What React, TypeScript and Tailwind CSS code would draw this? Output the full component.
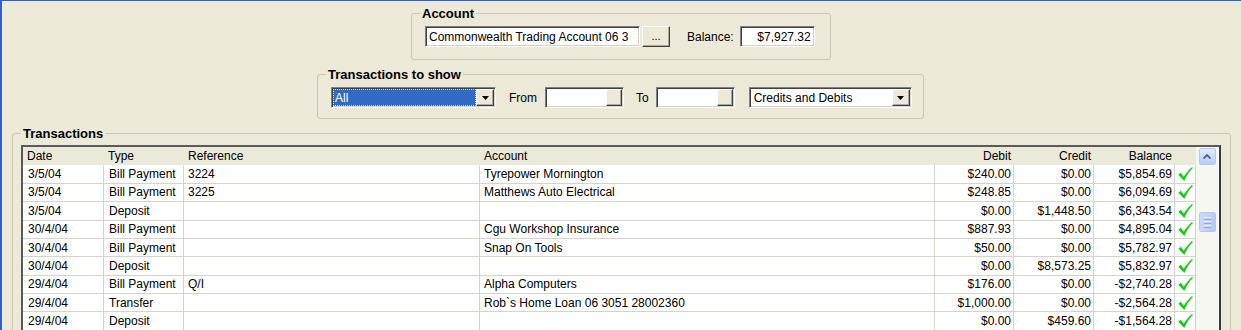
import React from 'react';

type Row = {
    date: string;
    type: string;
    ref: string;
    account: string;
    debit: string;
    credit: string;
    balance: string;
};

const rows: Row[] = [
    { date: '3/5/04', type: 'Bill Payment', ref: '3224', account: 'Tyrepower Mornington', debit: '$240.00', credit: '$0.00', balance: '$5,854.69' },
    { date: '3/5/04', type: 'Bill Payment', ref: '3225', account: 'Matthews Auto Electrical', debit: '$248.85', credit: '$0.00', balance: '$6,094.69' },
    { date: '3/5/04', type: 'Deposit', ref: '', account: '', debit: '$0.00', credit: '$1,448.50', balance: '$6,343.54' },
    { date: '30/4/04', type: 'Bill Payment', ref: '', account: 'Cgu Workshop Insurance', debit: '$887.93', credit: '$0.00', balance: '$4,895.04' },
    { date: '30/4/04', type: 'Bill Payment', ref: '', account: 'Snap On Tools', debit: '$50.00', credit: '$0.00', balance: '$5,782.97' },
    { date: '30/4/04', type: 'Deposit', ref: '', account: '', debit: '$0.00', credit: '$8,573.25', balance: '$5,832.97' },
    { date: '29/4/04', type: 'Bill Payment', ref: 'Q/I', account: 'Alpha Computers', debit: '$176.00', credit: '$0.00', balance: '-$2,740.28' },
    { date: '29/4/04', type: 'Transfer', ref: '', account: 'Rob`s Home Loan 06 3051 28002360', debit: '$1,000.00', credit: '$0.00', balance: '-$2,564.28' },
    { date: '29/4/04', type: 'Deposit', ref: '', account: '', debit: '$0.00', credit: '$459.60', balance: '-$1,564.28' },
];

const sunken = 'bg-white border border-t-[#808080] border-l-[#808080] border-b-white border-r-white shadow-[inset_1px_1px_0_#404040,inset_-1px_-1px_0_#D4D0C8]';
const raised = 'bg-[#ECE9D8] border border-t-white border-l-white border-b-[#404040] border-r-[#404040] shadow-[inset_-1px_-1px_0_#ACA899]';

function Tick() {
    return (
        <svg width="16" height="16" viewBox="0 0 14 14">
            <path d="M1.2 7.6 L3.3 6 L5.9 9.3 C8 6 10.5 3 13.2 0.8 L13.9 1.7 C11 4.5 8.6 8 6.4 13.2 Z" fill="#14CC14" />
        </svg>
    );
}

function DropButton() {
    return (
        <div className={`${raised} w-[18px] h-full flex items-center justify-center`}>
            <svg width="7" height="4" viewBox="0 0 7 4">
                <path d="M0 0 H7 L3.5 4 Z" fill="#000" />
            </svg>
        </div>
    );
}

function GroupBox({ title, className, children }: { title: string; className?: string; children: React.ReactNode }) {
    return (
        <fieldset className={`border border-[#C9C6B6] rounded-[3px] ${className ?? ''}`}>
            <legend className="ml-[8px] px-[2px] font-bold text-[13px] leading-[15px]">{title}</legend>
            {children}
        </fieldset>
    );
}

export default function App() {
    const cell = 'flex items-center border-r border-b border-[#D6D3CB] overflow-hidden whitespace-nowrap';

    return (
        <div className="w-[1241px] h-[330px] overflow-hidden bg-[#ECE9D8] border-t border-t-[#2F5FD8] border-l-2 border-l-[#2F5FD8] font-['Liberation_Sans',Arial,sans-serif] text-[12px] text-black">
            <div className="flex flex-col pt-[5px]">
                {/* Account */}
                <GroupBox title="Account" className="ml-[409px] w-[420px]">
                    <div className="flex items-center h-[21px] mt-[5px] mb-[12px] ml-[13px]">
                        <div className={`${sunken} w-[215px] h-full flex items-center px-[3px]`}>
                            Commonwealth Trading Account 06 3
                        </div>
                        <div className={`${raised} ml-[2px] w-[28px] h-full flex items-center justify-center text-[11px]`}>...</div>
                        <span className="ml-[17px]">Balance:</span>
                        <div className={`${sunken} ml-[6px] w-[75px] h-full flex items-center justify-end px-[3px]`}>$7,927.32</div>
                    </div>
                </GroupBox>

                {/* Transactions to show */}
                <GroupBox title="Transactions to show" className="ml-[315px] mt-[7px] w-[607px]">
                    <div className="flex items-center h-[21px] mt-[5px] mb-[10px] ml-[13px]">
                        <div className={`${sunken} w-[165px] h-full flex items-stretch p-[1px]`}>
                            <div className="flex-1 bg-[#316AC5] text-white flex items-center px-[2px] outline-1 outline-dotted outline-[#D0D8F0] -outline-offset-1">All</div>
                            <DropButton />
                        </div>
                        <span className="ml-[13px]">From</span>
                        <div className={`${sunken} ml-[8px] w-[79px] h-full flex justify-end p-[1px]`}>
                            <div className={`${raised} w-[16px] h-full`} />
                        </div>
                        <span className="ml-[12px]">To</span>
                        <div className={`${sunken} ml-[7px] w-[79px] h-full flex justify-end p-[1px]`}>
                            <div className={`${raised} w-[16px] h-full`} />
                        </div>
                        <div className={`${sunken} ml-[14px] w-[163px] h-full flex items-stretch p-[1px]`}>
                            <div className="flex-1 flex items-center px-[3px]">Credits and Debits</div>
                            <DropButton />
                        </div>
                    </div>
                </GroupBox>

                {/* Transactions */}
                <GroupBox title="Transactions" className="ml-[10px] mt-[7px] w-[1219px]">
                    <div className="mt-[4px] ml-[8px] mr-[9px] border-2 border-t-[#5A5A5A] border-l-[#5A5A5A] border-r-[#3C3C3C] border-b-[#3C3C3C] bg-white flex">
                        <div className="grid grid-cols-[81px_80px_296px_455px_79px_80px_81px_21px] auto-rows-[18.375px]">
                            {['Date', 'Type', 'Reference', 'Account'].map((h) => (
                                <div key={h} className="flex items-center bg-[#EBE9DA] pl-[4px] h-[18px] self-start">{h}</div>
                            ))}
                            {['Debit', 'Credit', 'Balance'].map((h) => (
                                <div key={h} className="flex items-center justify-end bg-[#EBE9DA] pr-[3px] h-[18px] self-start">{h}</div>
                            ))}
                            <div className="bg-[#EBE9DA] h-[18px] self-start" />
                            {rows.map((r, i) => (
                                <React.Fragment key={i}>
                                    <div className={`${cell} pl-[5px]`}>{r.date}</div>
                                    <div className={`${cell} pl-[5px]`}>{r.type}</div>
                                    <div className={`${cell} pl-[4px]`}>{r.ref}</div>
                                    <div className={`${cell} pl-[4px]`}>{r.account}</div>
                                    <div className={`${cell} justify-end pr-[2px]`}>{r.debit}</div>
                                    <div className={`${cell} justify-end pr-[2px]`}>{r.credit}</div>
                                    <div className={`${cell} justify-end pr-[2px]`}>{r.balance}</div>
                                    <div className={`${cell} justify-center`}><Tick /></div>
                                </React.Fragment>
                            ))}
                        </div>
                        {/* scrollbar */}
                        <div className="w-[22px] bg-[#F7F7F1] flex flex-col items-center pt-[1px] px-[1px]">
                            <div className="w-[17px] h-[17px] rounded-[2px] border border-[#B5C7F2] bg-gradient-to-b from-[#E2EBFE] to-[#B9CCF6] flex items-center justify-center">
                                <svg width="8" height="5" viewBox="0 0 8 5">
                                    <path d="M0.5 4.5 L4 1 L7.5 4.5" stroke="#4D6185" strokeWidth="1.8" fill="none" />
                                </svg>
                            </div>
                            <div className="mt-[47px] w-[17px] h-[20px] rounded-[2px] border border-[#B5C7F2] bg-gradient-to-r from-[#CAD8FC] to-[#B8CBF6] flex flex-col items-center justify-center gap-[1px]">
                                <div className="w-[7px] h-[1px] bg-[#EEF3FF]" />
                                <div className="w-[7px] h-[1px] bg-[#8DA5E0]" />
                                <div className="w-[7px] h-[1px] bg-[#EEF3FF]" />
                                <div className="w-[7px] h-[1px] bg-[#8DA5E0]" />
                                <div className="w-[7px] h-[1px] bg-[#EEF3FF]" />
                                <div className="w-[7px] h-[1px] bg-[#8DA5E0]" />
                            </div>
                        </div>
                    </div>
                </GroupBox>
            </div>
        </div>
    );
}
